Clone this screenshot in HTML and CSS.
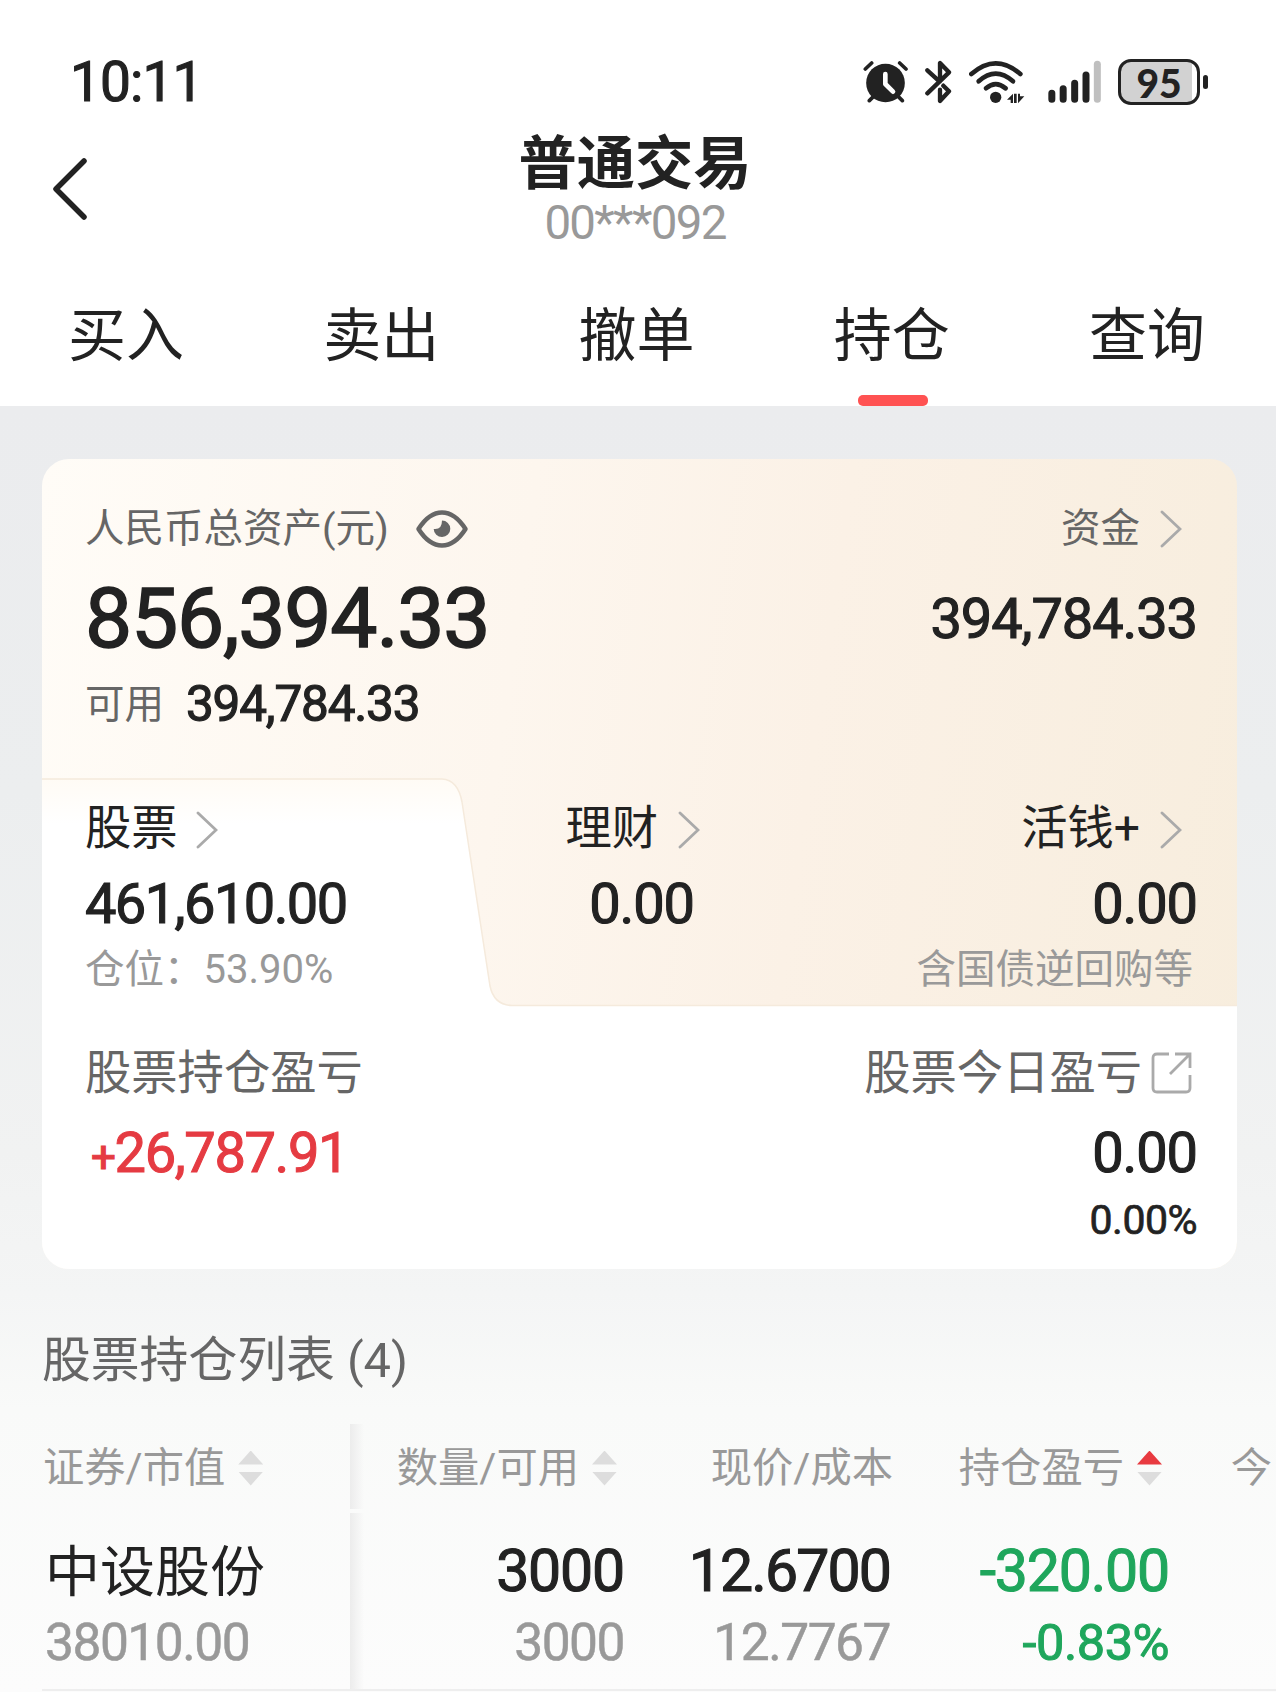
FILE: index.html
```html
<!DOCTYPE html>
<html lang="zh-CN">
<head>
  <meta charset="UTF-8">
  <meta name="viewport" content="width=device-width, initial-scale=1.0">
  <title>普通交易</title>
  <link rel="stylesheet" href="styles.css">
</head>
<body>
  <header class="top">
    <div class="status">
      <span class="time">10:11</span>
      <div class="status-icons">
        <svg class="alarm" viewBox="66 60 135 132" width="45" height="44">
          <g stroke="#222" stroke-linecap="round" stroke-width="11" fill="none">
            <path d="M73 87L92 69M195 87L176 69M85 182L97 170M184 182L172 170"/>
          </g>
          <circle cx="133.500" cy="129" r="58" fill="#222"/>
          <path d="M133 102V132L156 155" fill="none" stroke="#fff" stroke-width="14" stroke-linecap="round" stroke-linejoin="round"/>
        </svg>
        <svg class="bt" viewBox="252 60 81 132" width="27" height="44">
          <path d="M259 91L296 125M259 160L324 97L297 69V123M307 137L324 154L297 183V149" fill="none" stroke="#222" stroke-width="13" stroke-linecap="round" stroke-linejoin="round"/>
        </svg>
        <svg class="wifi" viewBox="384 60 168 132" width="56" height="44">
          <g fill="none" stroke="#222" stroke-width="14" stroke-linecap="round">
            <path d="M391 102Q464 38 538 102"/>
            <path d="M413 124Q464 78 516 124"/>
            <path d="M435 145Q464 120 494 145"/>
          </g>
          <circle cx="464" cy="172" r="17" fill="#222"/>
          <path d="M498 179L516 161V189H509V179ZM519 161H527V189H519ZM531 161H537V169H550L531 190Z" fill="#222"/>
        </svg>
        <svg class="signal" viewBox="622 60 159 132" width="53" height="44">
          <g stroke-width="21" stroke-linecap="round" stroke="#222">
            <path d="M633.500 160V178M667.500 146V178M702 130V178M736 105V178"/>
            <path d="M770 73V178" stroke="#bfbfbf"/>
          </g>
        </svg>
        <div class="battery"><span>95</span></div>
        <i class="nub"></i>
      </div>
    </div>

    <div class="title-bar">
      <svg class="back" viewBox="0 0 36 64" width="36" height="64">
        <path d="M32 4L4 32L32 60" fill="none" stroke="#222" stroke-width="5.500" stroke-linecap="round" stroke-linejoin="round"/>
      </svg>
      <div class="titles">
        <h1>普通交易</h1>
        <p>00***092</p>
      </div>
    </div>

    <nav class="tabs">
      <a>买入</a>
      <a>卖出</a>
      <a>撤单</a>
      <a class="active">持仓</a>
      <a>查询</a>
    </nav>
  </header>

  <main>
    <section class="card">
      <!-- white folder tab for the selected asset -->
      <svg class="folder" viewBox="0 0 1195 810" width="1195" height="810">
        <defs>
          <linearGradient id="fade" gradientUnits="userSpaceOnUse" x1="0" y1="320" x2="0" y2="365">
            <stop offset="0" stop-color="#fffbf5"/>
            <stop offset="1" stop-color="#fff"/>
          </linearGradient>
        </defs>
        <path d="M-2 320H400Q416 321 420 343L448 527Q452 546 470 546.500H1197V812H-2Z" fill="url(#fade)" stroke="#f5eadc" stroke-width="1.500"/>
      </svg>

      <div class="row row-label">
        <div class="label">人民币总资产(元)
          <svg class="eye" viewBox="0 0 54 40" width="54" height="40">
            <path d="M3.500 20Q14 3.500 27 3.500T50.500 20Q40 36.500 27 36.500T3.500 20Z" fill="none" stroke="#666" stroke-width="4.500" stroke-linejoin="round"/>
            <path d="M27 11.500A8.300 8.300 0 1 1 18.700 20Q27 21 27 11.500Z" fill="#666"/>
          </svg>
        </div>
        <div class="label">资金<svg class="chev" viewBox="0 0 22 38" width="22" height="38"><path d="M2 2L20 19L2 36"/></svg></div>
      </div>
      <div class="row row-total">
        <strong class="total">856,394.33</strong>
        <span class="num">394,784.33</span>
      </div>
      <div class="row row-avail">
        <div class="avail">可用<b>394,784.33</b></div>
      </div>

      <div class="assets">
        <div class="asset first">
          <div class="name">股票<svg class="chev" viewBox="0 0 22 38" width="22" height="38"><path d="M2 2L20 19L2 36"/></svg></div>
          <div class="num">461,610.00</div>
          <div class="hint">仓位：<span>53.90%</span></div>
        </div>
        <div class="asset mid">
          <div class="name">理财<svg class="chev" viewBox="0 0 22 38" width="22" height="38"><path d="M2 2L20 19L2 36"/></svg></div>
          <div class="num">0.00</div>
        </div>
        <div class="asset last">
          <div class="name">活钱+<svg class="chev" viewBox="0 0 22 38" width="22" height="38"><path d="M2 2L20 19L2 36"/></svg></div>
          <div class="num">0.00</div>
          <div class="hint">含国债逆回购等</div>
        </div>
      </div>

      <div class="profit">
        <div>
          <div class="ptitle">股票持仓盈亏</div>
          <div class="num up"><small>+</small>26,787.91</div>
        </div>
        <div class="today">
          <div class="ptitle">股票今日盈亏<svg class="share" viewBox="0 0 42 42" width="42" height="42"><path d="M18 2H6Q2 2 2 6V36Q2 40 6 40H35Q39 40 39 36V23M24 2H39V16M38 3L19 22"/></svg></div>
          <div class="num">0.00</div>
          <div class="pct">0.00%</div>
        </div>
      </div>
    </section>

    <h2>股票持仓列表 (4)</h2>

    <div class="table">
      <div class="col c1">
        <div class="th">证券/市值<span class="sort"><i></i><i></i></span></div>
        <div class="main cn">中设股份</div>
        <div class="sub">38010.00</div>
      </div>
      <div class="divider"><i></i><i></i></div>
      <div class="col c2">
        <div class="th">数量/可用<span class="sort"><i></i><i></i></span></div>
        <div class="main">3000</div>
        <div class="sub">3000</div>
      </div>
      <div class="col c3">
        <div class="th">现价/成本</div>
        <div class="main tight">12.6700</div>
        <div class="sub">12.7767</div>
      </div>
      <div class="col c4">
        <div class="th">持仓盈亏<span class="sort asc"><i></i><i></i></span></div>
        <div class="main down">-320.00</div>
        <div class="sub down">-0.83%</div>
      </div>
      <div class="col c5">
        <div class="th">今</div>
      </div>
    </div>
  </main>
</body>
</html>
```
FILE: styles.css
```css
* {
  box-sizing: border-box;
  margin: 0;
  padding: 0;
}
body {
  width: 1276px;
  height: 1692px;
  overflow: hidden;
  font-family: Roboto, "Noto Sans CJK SC", sans-serif;
  color: #222;
  background: #fff;
}
svg {
  display: block;
  flex: none;
}

/* figures sit between regular and medium */
.time,
.total,
.num,
.avail b,
.pct,
.main {
  font-weight: 400;
  -webkit-text-stroke: 1.100px currentColor;
}

/* header */
.top {
  height: 406px;
  background: #fff;
}
.status {
  height: 122px;
  padding: 42px 68px 0 70px;
  display: flex;
  justify-content: space-between;
  align-items: center;
}
.time {
  font-size: 55px;
  line-height: 80px;
  letter-spacing: -0.900px;
}
.status-icons {
  display: flex;
  align-items: center;
}
.bt {
  margin-left: 17px;
}
.wifi {
  margin-left: 17px;
}
.signal {
  margin-left: 23px;
}
.battery {
  width: 82px;
  height: 46px;
  margin-left: 17px;
  border: 3.500px solid #222;
  border-radius: 13px;
  background: linear-gradient(90deg, #d2d2d2 71px, #fff 71px);
  font: 900 39px/42px Lato, sans-serif;
  text-align: center;
}
.nub {
  width: 5px;
  height: 14px;
  margin-left: 3px;
  border-radius: 3px;
  background: #222;
}
.title-bar {
  height: 122px;
  display: flex;
  align-items: center;
}
.back {
  margin: 11px 0 0 52px;
}
.titles {
  flex: 1;
  padding-right: 94px;
  text-align: center;
}
h1 {
  font-size: 58.300px;
  font-weight: 700;
  line-height: 88px;
  height: 81px;
}
.titles p {
  font-size: 47.500px;
  line-height: 45px;
  letter-spacing: -1.700px;
  color: #999;
}
.tabs {
  display: flex;
}
.tabs a {
  flex: 1;
  height: 162px;
  padding: 56px 3px 0 0;
  font-size: 58px;
  line-height: 72px;
  text-align: center;
}
.tabs .active::after {
  content: "";
  display: block;
  position: relative;
  left: 1px;
  width: 70px;
  height: 11px;
  margin: 23px auto 0;
  border-radius: 5px;
  background: #ff5252;
}

/* assets card */
main {
  height: 1286px;
  padding-top: 53px;
  overflow: hidden;
  background: linear-gradient(#ebecee, #eceeef 30%, #f1f2f2 58%, #f4f5f5 69%, #f9faf9 78%, #fcfcfc);
}
.card {
  position: relative;
  width: 1195px;
  height: 810px;
  margin-left: 42px;
  padding: 39px 40px 0 43px;
  border-radius: 27px;
  overflow: hidden;
  background: linear-gradient(98deg, #fffcf7, #fdf6ee 38%, #fbf1e6 62%, #f7eddd);
}
.card > div {
  position: relative;
}
.folder {
  position: absolute;
  left: 0;
  top: 0;
}
.row {
  display: flex;
  justify-content: space-between;
  align-items: center;
}
.row-label {
  height: 60px;
}
.row-total {
  height: 118px;
  padding-top: 3px;
}
.row-avail {
  height: 56px;
}
.label {
  display: flex;
  align-items: center;
  padding-top: 2px;
  font-size: 39.500px;
  line-height: 60px;
  color: #666;
}
.eye {
  margin-left: 26px;
}
.chev {
  margin: 0 15px 0 20px;
  fill: none;
  stroke: #aaa;
  stroke-width: 2.800px;
  stroke-linecap: round;
}
.total {
  font-size: 84px;
  letter-spacing: -1.200px;
  -webkit-text-stroke-width: 1.500px;
}
.num {
  font-size: 56px;
  letter-spacing: -1.100px;
}
.avail {
  font-size: 39.500px;
  line-height: 58px;
  color: #666;
}
.avail b {
  margin-left: 22px;
  font-size: 49.500px;
  letter-spacing: -1.200px;
  color: #222;
  vertical-align: -3px;
}
.assets {
  display: grid;
  grid-template-columns: 340px 277px 1fr;
  height: 188px;
  margin-top: 67px;
}
.name {
  display: flex;
  align-items: center;
  height: 58px;
  font-size: 46.300px;
  line-height: 64px;
}
.name .chev {
  margin-top: 3px;
}
.first .chev {
  margin-left: 18px;
}
.assets .num {
  line-height: 95px;
  height: 93px;
}
.first .num {
  letter-spacing: -1.600px;
}
.hint {
  font-size: 39.500px;
  line-height: 39px;
  color: #999;
}
.hint span {
  font-size: 40px;
}
.mid .name,
.last .name {
  justify-content: flex-end;
}
.mid .chev {
  margin-right: 2px;
}
.mid .num {
  padding-right: 8px;
  text-align: right;
}
.last {
  text-align: right;
}
.last .hint {
  padding-right: 4px;
}
.profit {
  display: flex;
  justify-content: space-between;
  margin-top: 53px;
}
.ptitle {
  display: flex;
  height: 60px;
  font-size: 46.300px;
  line-height: 66px;
  color: #666;
}
.profit .num {
  height: 105px;
  line-height: 107px;
}
.profit .up {
  padding-left: 6px;
  letter-spacing: -1.400px;
  color: #e53b42;
}
.up small {
  font-size: 44px;
}
.today {
  text-align: right;
}
.share {
  margin: 12px 4px 0 9px;
  fill: none;
  stroke: #aaa;
  stroke-width: 2.800px;
}
.pct {
  font-size: 41px;
  line-height: 31px;
  letter-spacing: -0.500px;
  -webkit-text-stroke-width: 0.700px;
}

/* positions list */
h2 {
  margin: 54px 0 0 42px;
  font-size: 48.800px;
  font-weight: 400;
  line-height: 76px;
  color: #666;
}
.table {
  display: flex;
  height: 267px;
  margin: 25px 0 0 42px;
  border-bottom: 2px solid #eee;
}
.col {
  flex: none;
  text-align: right;
}
.th {
  display: flex;
  justify-content: flex-end;
  align-items: center;
  height: 88px;
  font-size: 41.300px;
  line-height: 90px;
  color: #999;
}
.main {
  height: 114px;
  font-size: 59px;
  line-height: 117px;
  letter-spacing: -1.200px;
}
.main.tight {
  letter-spacing: -1.900px;
}
.main.cn {
  font-size: 55px;
  line-height: 121px;
  letter-spacing: 0;
  -webkit-text-stroke-width: 0;
}
.sub {
  font-size: 51.500px;
  line-height: 33px;
  letter-spacing: -1.500px;
  color: #999;
  -webkit-text-stroke: 0.500px currentColor;
}
.c1 {
  width: 308px;
  padding-left: 3px;
  text-align: left;
}
.c1 .th {
  justify-content: flex-start;
  margin-left: -2px;
}
.divider {
  width: 14px;
  display: flex;
  flex-direction: column;
  gap: 4px;
}
.divider i {
  height: 85px;
  background: linear-gradient(90deg, #ececec, rgba(250, 250, 250, 0));
}
.divider i + i {
  flex: 1;
}
.c2 {
  width: 260px;
}
.c2 .th {
  padding-right: 7px;
}
.c3 {
  width: 266px;
}
.c3 .th {
  margin-right: -3px;
}
.c4 {
  width: 279px;
}
.c4 .th {
  padding-right: 7px;
}
.c5 {
  width: 103px;
}
.down,
.sub.down {
  color: #1fa65c;
}
.sub.down {
  font-size: 50.500px;
  letter-spacing: -0.500px;
  -webkit-text-stroke-width: 1px;
}
.sort {
  display: flex;
  flex-direction: column;
  gap: 7px;
  margin-left: 13px;
}
.sort i {
  width: 25px;
  height: 14px;
  background: #ddd;
  clip-path: polygon(50% 0, 100% 100%, 0 100%);
}
.sort i + i {
  clip-path: polygon(0 0, 100% 0, 50% 100%);
}
.sort.asc i:first-child {
  background: #e83a40;
}
```
